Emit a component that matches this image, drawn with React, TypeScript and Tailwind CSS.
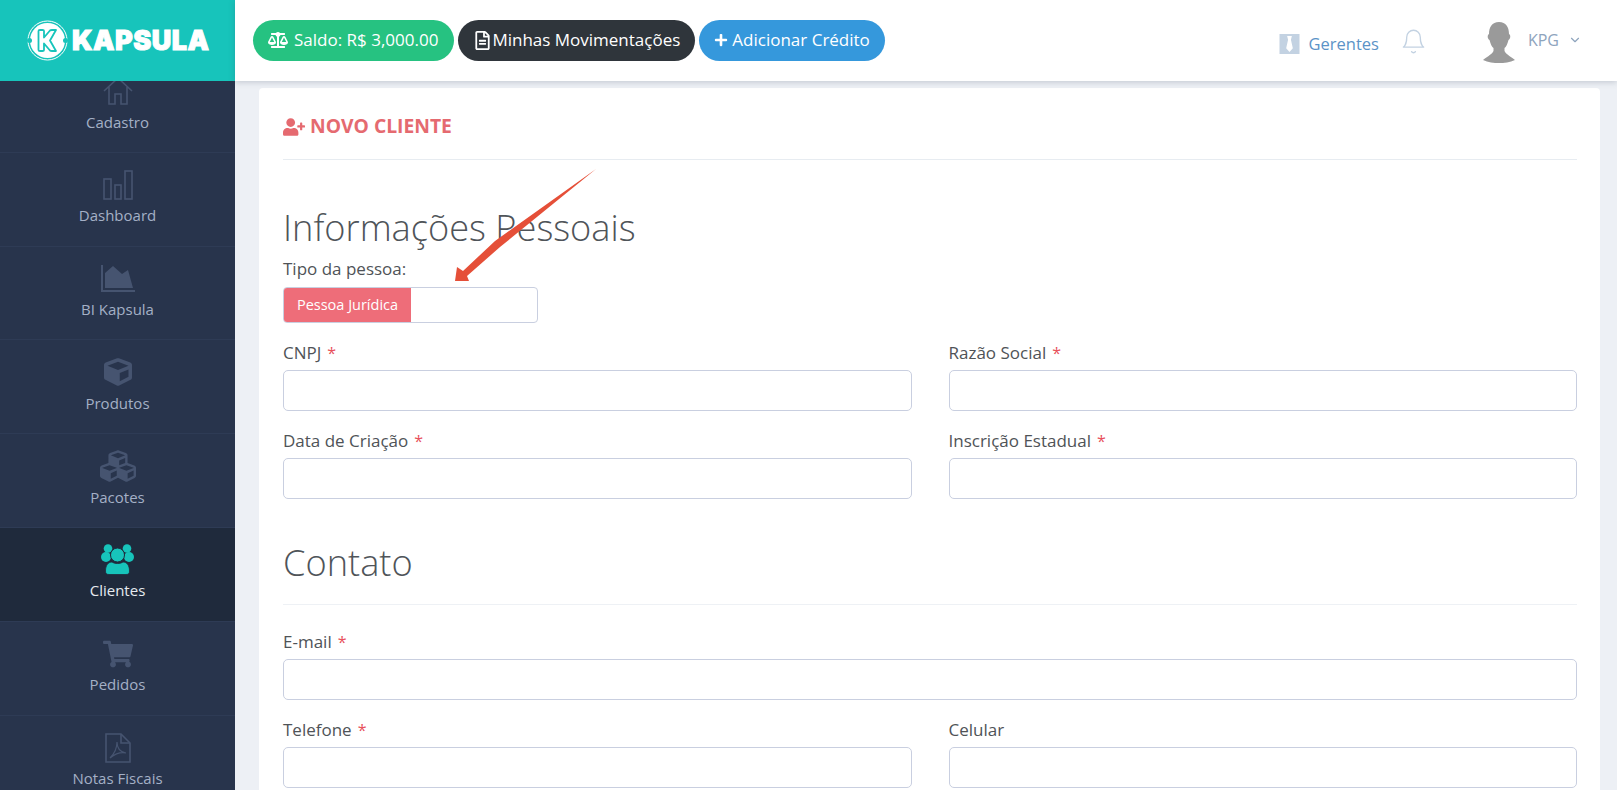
import React from "react";
import { FaBalanceScale, FaRegFileAlt, FaPlus, FaUserPlus, FaShoppingCart, FaCube, FaCubes } from "react-icons/fa";
import { FiChevronDown, FiBell } from "react-icons/fi";

const iconColor = "text-[#465470]";

function HomeIcon() {
  return (
    <svg width="32" height="32" viewBox="0 0 32 32" fill="none" stroke="#465470" strokeWidth="1.6">
      <path d="M2 16 L16 3 L30 16 M7 12 V29 H13 V19 H19 V29 H25 V12" />
    </svg>
  );
}

function BarsIcon() {
  return (
    <svg width="30" height="32" viewBox="0 0 30 32" fill="none" stroke="#465470" strokeWidth="1.6">
      <rect x="1" y="10" width="7" height="20" />
      <rect x="12" y="16" width="6" height="14" />
      <rect x="22" y="2" width="7" height="28" />
    </svg>
  );
}

function AreaIcon() {
  return (
    <svg width="34" height="27" viewBox="0 0 34 27" fill="#465470">
      <path d="M0 0 H2 V25 H34 V27 H0 Z" />
      <path d="M4 23 V8 L12 1 L21 9 L27 5 L32 23 Z" />
    </svg>
  );
}

function PdfIcon() {
  return (
    <svg width="26" height="30" viewBox="0 0 26 30" fill="none" stroke="#465470" strokeWidth="1.6">
      <path d="M1 1 H16 L25 10 V29 H1 Z" />
      <path d="M16 1 V10 H25" />
      <path d="M5 25 C9 21 12 15 12 9 C12 15 15 19 21 20 C16 19 10 21 5 25 Z" strokeWidth="1.200" />
    </svg>
  );
}

function UsersIcon() {
  return (
    <svg width="33" height="31" viewBox="0 0 33 31" fill="#17c4bb">
      <circle cx="7" cy="4.500" r="4.300" />
      <circle cx="26" cy="4.500" r="4.300" />
      <circle cx="5" cy="13" r="5" />
      <circle cx="28" cy="13" r="5" />
      <circle cx="16.500" cy="11" r="7" stroke="#1f2a3c" strokeWidth="1" />
      <path d="M4.500 27 C4.500 21 7.500 18 11 18 C14 20 19 20 22 18 C25.500 18 28.500 21 28.500 27 C28.500 29.500 27.500 30.500 25 30.500 H8 C5.500 30.500 4.500 29.500 4.500 27 Z" stroke="#1f2a3c" strokeWidth="0.800" />
    </svg>
  );
}

function NavItem({ icon, label, active }: { icon: React.ReactNode; label: string; active?: boolean }) {
  return (
    <div className={`h-[93.8px] shrink-0 flex flex-col items-center pt-[10px] border-b border-[#2e3b55] ${active ? "bg-[#1f2a3c]" : ""}`}>
      <div className="h-[44px] flex items-center justify-center">{icon}</div>
      <span className={`text-[15px] leading-[20px] -mt-[1.5px] ${active ? "text-[#e6eaf0]" : "text-[#a4b0c6]"}`}>{label}</span>
    </div>
  );
}

function Field({ label, required = true, className = "" }: { label: string; required?: boolean; className?: string }) {
  return (
    <div className={`flex flex-col ${className}`}>
      <label className="text-[17px] leading-[22px] text-[#4f5357] h-[24px] pt-[1px]">
        {label}
        {required && <span className="text-[#e8505b] text-[16px] ml-[6px]">*</span>}
      </label>
      <div className="mt-[5px] h-[41px] rounded-[5px] border border-[#c9cfe0] bg-white" />
    </div>
  );
}

function Avatar() {
  return (
    <svg width="32" height="41" viewBox="0 0 32 41" fill="#9a9a9a">
      <path d="M16 0 C23 0 26 5 26 12 C28 13 27.500 17 25.500 18 C24.500 22 23 25 21.500 26 V29 C23.500 33 29 35 32 38 C27 40.500 21 41 16 41 C11 41 5 40.500 0 38 C3 35 8.500 33 10.500 29 V26 C9 25 7.500 22 6.500 18 C4.500 17 4 13 6 12 C6 5 9 0 16 0 Z" />
    </svg>
  );
}

function TieBox() {
  return (
    <svg width="21" height="20" viewBox="0 0 21 21">
      <rect width="21" height="21" fill="#c3d2e2" />
      <path d="M8 2 H13 L12 6 L14 15 L10.500 19 L7 15 L9 6 Z" fill="#ffffff" />
    </svg>
  );
}

function Logo() {
  return (
    <div className="flex items-center h-full pl-[27px]">
      <svg width="41" height="41" viewBox="0 0 41 41">
        <circle cx="20.500" cy="20.500" r="19.500" fill="none" stroke="#ffffff" strokeWidth="1" />
        <circle cx="20.500" cy="20.500" r="17.500" fill="#ffffff" />
        <circle cx="2.500" cy="20.500" r="2.500" fill="#17c4bb" />
        <circle cx="38.500" cy="20.500" r="2.500" fill="#17c4bb" />
        <path d="M11.500 11 Q11.500 10 13 10 H15.500 Q17 10 17 11 V17.500 L23 10.500 Q23.500 10 25 10 H29 L23 20.500 L29 31 H25 Q23.500 31 23 30.500 L17 23.500 V30 Q17 31 15.500 31 H13 Q11.500 31 11.500 30 Z" fill="none" stroke="#17c4bb" strokeWidth="1.800" strokeLinejoin="round" />
      </svg>
      <span className="ml-[4px] text-white text-[27px] leading-none font-black tracking-[0.5px] [-webkit-text-stroke:1px_white] font-['Inter',sans-serif]">KAPSULA</span>
    </div>
  );
}

export default function App() {
  return (
    <div className="relative flex h-[790px] w-full overflow-hidden bg-[#edf0f5] font-['Open_Sans',sans-serif]">
      <aside className="w-[235px] shrink-0 flex flex-col bg-[#28344c]">
        <div className="h-[81px] shrink-0 bg-[#17c4bb]">
          <Logo />
        </div>
        <nav className="flex-1 overflow-hidden">
          <div className="-mt-[22px] flex flex-col">
            <NavItem label="Cadastro" icon={<HomeIcon />} />
            <NavItem label="Dashboard" icon={<BarsIcon />} />
            <NavItem label="BI Kapsula" icon={<AreaIcon />} />
            <NavItem label="Produtos" icon={<FaCube size={28} className={iconColor} />} />
            <NavItem label="Pacotes" icon={<FaCubes size={36} className={iconColor} />} />
            <NavItem active label="Clientes" icon={<UsersIcon />} />
            <NavItem label="Pedidos" icon={<FaShoppingCart size={30} className={iconColor} />} />
            <NavItem label="Notas Fiscais" icon={<PdfIcon />} />
          </div>
        </nav>
      </aside>

      <div className="flex-1 flex flex-col min-w-0">
        <header className="relative z-10 h-[81px] shrink-0 bg-white shadow-[0_1px_6px_rgba(60,70,90,0.25)] flex items-center pl-[18px] pr-[35px]">
          <div className="flex items-center gap-[4px] -mt-[1px]">
            <div className="h-[41px] rounded-full bg-[#26c281] text-white flex items-center pl-[15px] pr-[16px] gap-[6px] text-[17px]">
              <FaBalanceScale size={20} />
              <span>Saldo: R$ 3,000.00</span>
            </div>
            <div className="h-[41px] rounded-full bg-[#2f353b] text-white flex items-center px-[15px] text-[17px]">
              <FaRegFileAlt size={19} />
              <span>Minhas Movimentações</span>
            </div>
            <div className="h-[41px] rounded-full bg-[#3598dc] text-white flex items-center px-[15px] gap-[4px] text-[17px]">
              <FaPlus size={14} />
              <span>Adicionar Crédito</span>
            </div>
          </div>
          <div className="ml-auto flex items-center mt-[6px]">
            <TieBox />
            <span className="ml-[9px] mt-[1px] text-[16.5px] text-[#5b93c7]">Gerentes</span>
            <FiBell size={27} strokeWidth={1.15} className="ml-[21px] -mt-[4px] text-[#c3d2e2]" />
            <div className="ml-[56px] -mt-[3px]"><Avatar /></div>
            <span className="ml-[13px] -mt-[8px] text-[16px] text-[#8ea4bd]">KPG</span>
            <FiChevronDown size={14} className="ml-[9px] -mt-[7px] text-[#8ea4bd]" />
          </div>
        </header>

        <main className="flex-1 min-h-0 overflow-hidden pl-[24px] pr-[17px] pt-[7px]">
          <div className="bg-white rounded-[4px] pl-[24px] pr-[23px] h-[800px]">
            <div className="h-[72px] flex items-center gap-[5px] border-b border-[#e7ecf1] text-[#e56a70] pt-[6px]">
              <FaUserPlus size={22} />
              <span className="text-[19.3px] font-bold">NOVO CLIENTE</span>
            </div>

            <h2 className="mt-[43px] text-[36.2px] leading-[48px] font-light text-[#4f5459]">Informações Pessoais</h2>
            <div className="mt-[7px] text-[17px] leading-[22px] text-[#4f5357]">Tipo da pessoa:</div>
            <div className="mt-[7px] w-[255px] h-[36px] rounded-[4px] border border-[#c9cfe0] overflow-hidden flex">
              <div className="w-[127px] bg-[#ee6d79] text-white text-[14.5px] font-medium flex items-center justify-center">Pessoa Jurídica</div>
            </div>

            <div className="mt-[18px] grid grid-cols-2 gap-x-[37px] gap-y-[18px]">
              <Field label="CNPJ" />
              <Field label="Razão Social" />
              <Field label="Data de Criação" />
              <Field label="Inscrição Estadual" />
            </div>

            <div className="mt-[38px] pb-[17px] border-b border-[#eef1f5]">
              <h2 className="text-[36.2px] leading-[50px] font-light text-[#4f5459]">Contato</h2>
            </div>

            <div className="mt-[25px] flex flex-col gap-[18px]">
              <Field label="E-mail" />
              <div className="grid grid-cols-2 gap-x-[37px]">
                <Field label="Telefone" />
                <Field label="Celular" required={false} />
              </div>
            </div>
          </div>
        </main>
      </div>

      <svg className="absolute left-[440px] top-[160px] pointer-events-none" width="170" height="130" viewBox="0 0 170 130">
        <polygon points="156,9 55,81 23,111 17,107 15,121 29,121 27,116 60,87" fill="#e54f38" />
      </svg>
    </div>
  );
}
